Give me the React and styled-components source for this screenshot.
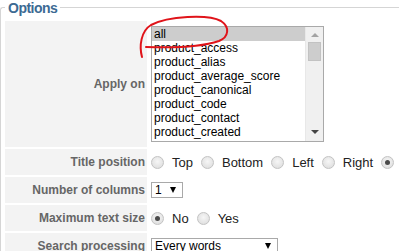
import React from "react";
import styled, { createGlobalStyle } from "styled-components";

const Global = createGlobalStyle`
  html, body { margin: 0; padding: 0; background: #fff; }
  body { font-family: "Liberation Sans", Arial, sans-serif; font-size: 12px; color: #333; overflow: hidden; }
`;

const Page = styled.div`
  position: relative;
  width: 399px;
  height: 251px;
  overflow: hidden;
`;

const Fieldset = styled.div`
  position: relative;
  margin-top: 7px;
  border-top: 1px solid #d5d5d5;
  border-left: 1px solid #d5d5d5;
  border-top-left-radius: 3px;
  padding: 13px 0 0 4px;
`;

const Legend = styled.div`
  position: absolute;
  top: -7px;
  left: 4px;
  padding: 0 3px;
  background: #fff;
  color: #3c6a93;
  font-weight: bold;
  font-size: 14px;
  letter-spacing: -0.5px;
  line-height: 15px;
`;

const Rows = styled.div`
  display: flex;
  flex-direction: column;
  gap: 2px;
`;

const Row = styled.div`
  display: flex;
  align-items: center;
  min-height: ${(p) => p.$h || 26}px;
`;

const Key = styled.div`
  align-self: stretch;
  width: 142px;
  flex: none;
  box-sizing: border-box;
  padding-right: 2px;
  background: #f3f3f3;
  color: #666;
  font-weight: bold;
  text-align: right;
  display: flex;
  align-items: center;
  justify-content: flex-end;
`;

const Value = styled.div`
  display: flex;
  align-items: center;
  padding-left: 4px;
  padding-top: ${(p) => p.$pt || 0}px;
  padding-bottom: ${(p) => p.$pb || 0}px;
`;

const ListBox = styled.div`
  position: relative;
  width: 171px;
  height: 114px;
  border: 1px solid #a9a9a9;
  display: flex;
  background: #fff;
`;

const Items = styled.div`
  flex: 1;
  overflow: hidden;
`;

const Item = styled.div`
  height: 14px;
  line-height: 14px;
  padding-left: 2px;
  color: #000;
  background: ${(p) => (p.$selected ? "#cdcdcd" : "transparent")};
  white-space: nowrap;
`;

const Scrollbar = styled.div`
  width: 17px;
  background: #f0f0f0;
  border-left: 1px solid #e8e8e8;
  display: flex;
  flex-direction: column;
  align-items: center;
`;

const Arrow = styled.div`
  width: 0;
  height: 0;
  margin: 6px 0 5px;
  border-left: 4px solid transparent;
  border-right: 4px solid transparent;
  ${(p) =>
    p.$up
      ? "border-bottom: 4px solid #a3a3a3;"
      : "border-top: 4px solid #444; margin-top: auto; margin-bottom: 7px;"}
`;

const Thumb = styled.div`
  width: 13px;
  height: 19px;
  background: #cdcdcd;
  border: 1px solid #c2c2c2;
  box-sizing: border-box;
`;

const Radios = styled.div`
  display: flex;
  align-items: center;
`;

const Radio = styled.span`
  width: 13px;
  height: 13px;
  flex: none;
  box-sizing: border-box;
  border-radius: 50%;
  border: 1px solid #c3c3c3;
  background: radial-gradient(circle at 50% 40%, #f6f6f6 0%, #dadada 100%);
  display: inline-flex;
  align-items: center;
  justify-content: center;
  margin-right: 8px;
  &::after {
    content: "";
    width: 5px;
    height: 5px;
    border-radius: 50%;
    background: ${(p) => (p.$checked ? "#4a4a4a" : "transparent")};
  }
`;

const RadioLabel = styled.span`
  font-size: 13px;
  color: #222;
  margin-right: 8px;
`;

const Select = styled.div`
  width: ${(p) => p.$w}px;
  height: 16px;
  box-sizing: border-box;
  border: 1px solid #a9a9a9;
  background: #fff;
  display: flex;
  align-items: center;
  justify-content: space-between;
  padding: 0 6px 0 3px;
  color: #000;
  font-size: 12px;
  line-height: 13px;
`;

const Caret = styled.span`
  width: 0;
  height: 0;
  border-left: 3.5px solid transparent;
  border-right: 3.5px solid transparent;
  border-top: 6px solid #000;
`;

const Scribble = styled.svg`
  position: absolute;
  left: 0;
  top: 0;
  pointer-events: none;
`;

const items = [
  "all",
  "product_access",
  "product_alias",
  "product_average_score",
  "product_canonical",
  "product_code",
  "product_contact",
  "product_created",
];

export default function App() {
  return (
    <Page>
      <Global />
      <Fieldset>
        <Legend>Options</Legend>
        <Rows>
          <Row $h={124}>
            <Key>Apply on</Key>
            <Value $pt={5} $pb={5}>
              <ListBox>
                <Items>
                  {items.map((t, i) => (
                    <Item key={t} $selected={i === 0}>
                      {t}
                    </Item>
                  ))}
                </Items>
                <Scrollbar>
                  <Arrow $up />
                  <Thumb />
                  <Arrow />
                </Scrollbar>
              </ListBox>
            </Value>
          </Row>
          <Row>
            <Key>Title position</Key>
            <Value>
              <Radios>
                <Radio />
                <RadioLabel>Top</RadioLabel>
                <Radio />
                <RadioLabel>Bottom</RadioLabel>
                <Radio />
                <RadioLabel>Left</RadioLabel>
                <Radio />
                <RadioLabel>Right</RadioLabel>
                <Radio $checked />
              </Radios>
            </Value>
          </Row>
          <Row>
            <Key>Number of columns</Key>
            <Value>
              <Select $w={32}>
                1 <Caret />
              </Select>
            </Value>
          </Row>
          <Row>
            <Key>Maximum text size</Key>
            <Value>
              <Radios>
                <Radio $checked />
                <RadioLabel>No</RadioLabel>
                <Radio />
                <RadioLabel>Yes</RadioLabel>
              </Radios>
            </Value>
          </Row>
          <Row>
            <Key>Search processing</Key>
            <Value>
              <Select $w={127}>
                Every words <Caret />
              </Select>
            </Value>
          </Row>
        </Rows>
      </Fieldset>
      <Scribble width="399" height="251" viewBox="0 0 399 251">
        <path
          d="M142,57 C139,46 141,31 151,25 C168,16 208,14 221,21 C230,27 229,37 219,41 C201,47 172,48 146,47"
          fill="none"
          stroke="#e0141a"
          strokeWidth="2"
          strokeLinecap="round"
        />
      </Scribble>
    </Page>
  );
}
